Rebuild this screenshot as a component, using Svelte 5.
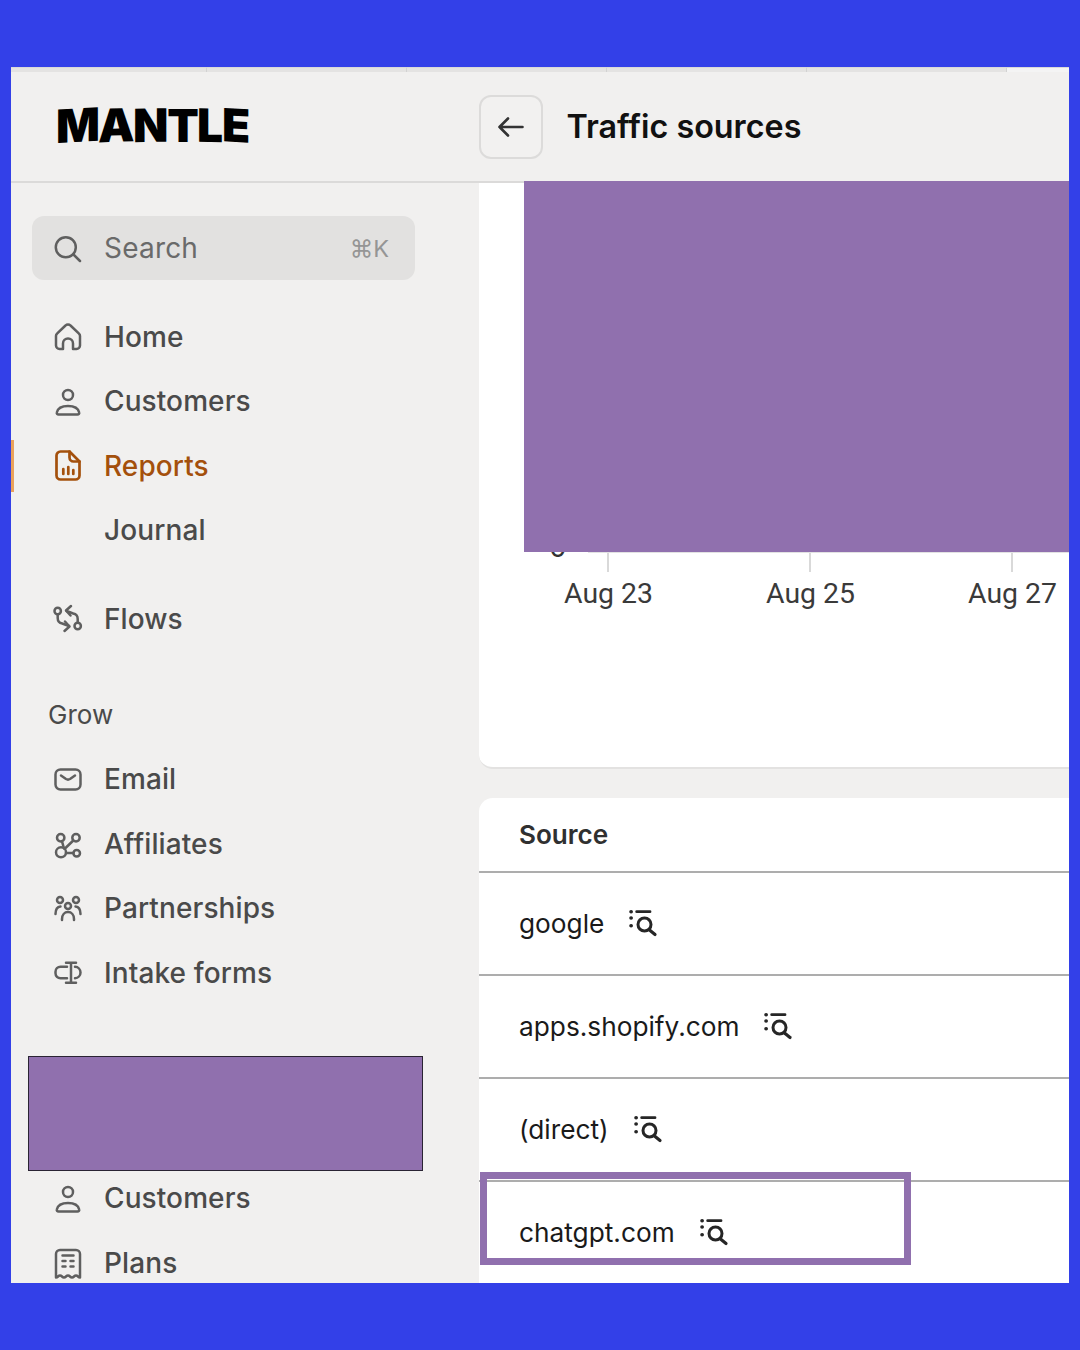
<script>
	const mainNav = [
		{ label: 'Home', icon: 'home' },
		{ label: 'Customers', icon: 'user' },
		{ label: 'Reports', icon: 'report', active: true },
		{ label: 'Journal', icon: null }
	];
	const growNav = [
		{ label: 'Email', icon: 'mail' },
		{ label: 'Affiliates', icon: 'nodes' },
		{ label: 'Partnerships', icon: 'people' },
		{ label: 'Intake forms', icon: 'cursor' }
	];
	const lowerNav = [
		{ label: 'Customers', icon: 'user' },
		{ label: 'Plans', icon: 'receipt' }
	];
	const sources = ['google', 'apps.shopify.com', '(direct)', 'chatgpt.com'];
	const ticks = ['Aug 23', 'Aug 25', 'Aug 27'];
	const logo = [
		{ ch: 'M', t: 'skewY(-3deg)' },
		{ ch: 'A', t: 'skewY(-2deg)' },
		{ ch: 'N', t: 'skewY(-1deg)' },
		{ ch: 'T', t: 'none' },
		{ ch: 'L', t: 'skewY(1deg)' },
		{ ch: 'E', t: 'skewY(3deg)' }
	];
</script>

{#snippet icon(name)}
	<svg class="icon" viewBox="0 0 28 28" fill="none" stroke="currentColor" stroke-width="2.5" stroke-linecap="round" stroke-linejoin="round">
		{#if name === 'home'}
			<path d="M2 13a3 3 0 0 1 1-2.3L11.500 2.500a3.500 3.500 0 0 1 5 0L25 10.700a3 3 0 0 1 1 2.300V22.500a3.500 3.500 0 0 1-3.500 3.500H19V20.500a5 5 0 0 0-10 0V26H5.500A3.500 3.500 0 0 1 2 22.500Z" />
		{:else if name === 'user'}
			<circle cx="14" cy="8" r="5" />
			<path d="M4.500 27.500h19c1.200 0 2-.9 1.700-2-.9-3.900-5-6.500-11.200-6.500S3.700 21.600 2.800 25.500c-.3 1.100.5 2 1.700 2Z" />
		{:else if name === 'report'}
			<g stroke-width="2.700">
				<path d="M6.500-.5h9L25.500 9.500V23.500a4 4 0 0 1-4 4H6.500a4 4 0 0 1-4-4V3.500a4 4 0 0 1 4-4Z" />
				<path d="M15.500-.5V5.500a4 4 0 0 0 4 4h6" />
				<path d="M9.300 17v5M14.300 15v7M19.300 18v4" />
			</g>
		{:else if name === 'flows'}
			<circle cx="3.700" cy="6" r="3.200" />
			<circle cx="23.700" cy="21" r="3.200" />
			<path d="M3.700 9.500v3.500c0 3 1.500 5 4.500 5.500L15 21" />
			<path d="M10.500 26 15.500 21.500 11 16.500" />
			<path d="M23.700 17.500V14c0-3-1.500-5-4.500-5.500L12.500 6" />
			<path d="M17 1 12 5.500 16.500 10.500" />
		{:else if name === 'mail'}
			<rect x="1.500" y="4.500" width="25" height="20" rx="5" />
			<path d="M7 10.500l5 3.500c1.300.8 2.700.8 4 0l5-3.500" />
		{:else if name === 'nodes'}
			<circle cx="6.700" cy="7.700" r="3.700" />
			<circle cx="22" cy="7.700" r="3.700" />
			<circle cx="7" cy="22.300" r="5" />
			<circle cx="22.700" cy="23.300" r="3.300" />
			<path d="M8 11.300 10 18.500M19.300 10.500 11 18.500M12 23h7.400" />
		{:else if name === 'people'}
			<circle cx="6" cy="6" r="3" />
			<circle cx="22" cy="6" r="3" />
			<circle cx="14" cy="12" r="3" />
			<path d="M1.500 20c0-4 1.500-7 5-7.500M26.500 20c0-4-1.500-7-5-7.500M8 26v-1c0-4 2.500-7 6-7s6 3 6 7v1" />
		{:else if name === 'cursor'}
			<path d="M13 7.700H6.500a5 5 0 0 0-5 5v1.600a5 5 0 0 0 5 5H13" />
			<path d="M21 7.700a5.800 5.800 0 0 1 5.500 5.800 5.800 5.800 0 0 1-5.500 5.800" />
			<path d="M12 3.700h10M17 3.700v20M12 23.700h10" />
		{:else if name === 'receipt'}
			<path d="M6 1h16a4 4 0 0 1 4 4v23.500c-2 0-2-2-4-2s-2 2-4 2-2-2-4-2-2 2-4 2-2-2-4-2-2 2-4 2V5a4 4 0 0 1 4-4Z" />
			<path d="M8.500 6.500h11M8.500 12h3M16.500 12h3M8.500 17.500h3M16.500 17.500h3" />
		{/if}
	</svg>
{/snippet}

{#snippet navItem(item)}
	<a class="nav-item" class:active={item.active} href="#top">
		<span class="icon-slot">
			{#if item.icon}{@render icon(item.icon)}{/if}
		</span>
		{item.label}
	</a>
{/snippet}

<div class="frame">
	<div class="strip">
		<span></span><span></span><span></span><span></span><span></span><span class="last"></span>
	</div>

	<header class="topbar">
		<div class="brand">
			<div class="logo">
				{#each logo as l}
					<span style="transform: {l.t}">{l.ch}</span>
				{/each}
			</div>
		</div>
		<div class="page-title">
			<button class="back" aria-label="Back">
				<svg viewBox="0 0 28 28" width="28" height="28" fill="none" stroke="currentColor" stroke-width="2.6" stroke-linecap="round" stroke-linejoin="round">
					<path d="M25.500 14H2.500M11 5.500 2.500 14l8.500 8.500" />
				</svg>
			</button>
			<h1>Traffic sources</h1>
		</div>
	</header>

	<div class="body">
		<aside class="sidebar">
			<div class="search">
				<svg class="icon" viewBox="0 0 28 28" fill="none" stroke="currentColor" stroke-width="2.5" stroke-linecap="round">
					<circle cx="11.800" cy="13.200" r="10" />
					<path d="m19.500 20.500 6.500 6.500" />
				</svg>
				<span class="search-label">Search</span>
				<span class="kbd">⌘K</span>
			</div>

			<nav class="nav main-nav">
				{#each mainNav as item}
					{@render navItem(item)}
				{/each}
			</nav>

			<nav class="nav flows">
				{@render navItem({ label: 'Flows', icon: 'flows' })}
			</nav>

			<div class="section-label">Grow</div>
			<nav class="nav">
				{#each growNav as item}
					{@render navItem(item)}
				{/each}
			</nav>

			<div class="covered"></div>

			<nav class="nav">
				{#each lowerNav as item}
					{@render navItem(item)}
				{/each}
			</nav>
		</aside>

		<main class="content">
			<section class="card chart">
				<div class="plot">
					<span class="zero">0</span>
				</div>
				<div class="axis">
					{#each ticks as tick}
						<div class="tick">
							<i></i>
							<span>{tick}</span>
						</div>
					{/each}
				</div>
			</section>

			<section class="card table">
				<div class="table-head">Source</div>
				{#each sources as source}
					<div class="row">
						<span>{source}</span>
						<svg class="drill" viewBox="0 0 28 28" fill="none" stroke="currentColor" stroke-linecap="round">
							<path d="M8.700 1.700H22" stroke-width="2.800" />
							<path d="M3 1.700h.2M3 8h.2M3 15.700h.2" stroke-width="3.600" />
							<circle cx="16.500" cy="14.500" r="6.500" stroke-width="3" />
							<path d="M21.500 20 27 24.500" stroke-width="3.200" />
						</svg>
					</div>
				{/each}
			</section>
		</main>
	</div>

	<!-- redactions and callout on top of the screenshot -->
	<div class="redact redact-chart"></div>
	<div class="redact redact-nav"></div>
	<div class="callout"></div>
</div>

<style>
	:global(body) {
		margin: 0;
		background: #3340e8;
	}

	.frame {
		position: relative;
		box-sizing: border-box;
		width: 1058px;
		height: 1216px;
		margin: 67px 0 0 11px;
		display: flex;
		flex-direction: column;
		overflow: hidden;
		background: #f1f0ef;
		font-family: Inter, 'Liberation Sans', sans-serif;
		color: #4a4a4a;
	}

	.strip {
		flex: none;
		display: flex;
		height: 5px;
		background: #e4e3e2;
	}

	.strip span {
		box-sizing: border-box;
		flex: none;
		width: 200px;
		border-right: 1px solid #d2d2d2;
		border-top: 1px solid #d9d9d9;
	}

	.strip span:first-child {
		width: 196px;
	}

	.strip .last {
		flex: 1;
		background: #f4f4f4;
		border-right: 0;
	}

	.topbar {
		flex: none;
		box-sizing: border-box;
		height: 111px;
		display: flex;
		align-items: center;
		border-bottom: 2px solid #dbdad9;
	}

	.brand {
		box-sizing: border-box;
		width: 468px;
		padding-left: 45px;
	}

	.logo {
		display: flex;
		margin-bottom: 3px;
		font-size: 46px;
		font-weight: 900;
		line-height: 1;
		letter-spacing: -1.6px;
		color: #000;
	}

	.logo span {
		display: block;
	}

	.page-title {
		display: flex;
		align-items: center;
		gap: 23.500px;
	}

	.back {
		box-sizing: border-box;
		width: 64px;
		height: 64px;
		padding: 0;
		display: flex;
		align-items: center;
		justify-content: center;
		background: #f2f1f0;
		border: 2px solid #dcdbda;
		border-radius: 12px;
		color: #333;
	}

	h1 {
		margin: 0;
		font-size: 32.300px;
		font-weight: 600;
		color: #111;
	}

	.body {
		flex: 1;
		min-height: 0;
		display: flex;
	}

	.sidebar {
		flex: none;
		box-sizing: border-box;
		width: 468px;
		padding-top: 33px;
	}

	.search {
		box-sizing: border-box;
		width: 383px;
		height: 64px;
		margin-left: 21px;
		padding: 0 26px 0 22px;
		display: flex;
		align-items: center;
		gap: 22px;
		background: #e2e1e0;
		border-radius: 12px;
		color: #5f5f5f;
		font-size: 28px;
		letter-spacing: 0.2px;
	}

	.search-label {
		flex: 1;
		color: #6a6a6a;
	}

	.kbd {
		font-size: 23.500px;
		letter-spacing: 0;
		color: #959595;
	}

	.nav {
		display: flex;
		flex-direction: column;
	}

	.main-nav {
		margin-top: 24.600px;
	}

	.flows {
		margin-top: 24px;
	}

	.nav-item {
		position: relative;
		box-sizing: border-box;
		height: 64.500px;
		padding-left: 43px;
		display: flex;
		align-items: center;
		gap: 22px;
		font-size: 28px;
		font-weight: 450;
		letter-spacing: 0.1px;
		color: #4a4a4a;
		text-decoration: none;
	}

	.nav-item.active {
		color: #a4500c;
	}

	.nav-item.active::before {
		content: '';
		position: absolute;
		left: 0;
		top: 6px;
		bottom: 6px;
		width: 3px;
		background: #eaa25c;
	}

	.icon-slot {
		flex: none;
		width: 28px;
		height: 28px;
		color: #5f5f5f;
	}

	.active .icon-slot {
		color: #a4500c;
	}

	.icon {
		display: block;
		flex: none;
		width: 28px;
		height: 28px;
		overflow: visible;
	}

	.section-label {
		height: 64.500px;
		margin-top: 31.500px;
		padding-left: 37px;
		display: flex;
		align-items: center;
		font-size: 26px;
		color: #4a4a4a;
	}

	.covered {
		height: 129px;
		margin-top: 32px;
	}

	.content {
		flex: 1;
		min-width: 0;
		display: flex;
		flex-direction: column;
		gap: 29px;
	}

	.card {
		background: #fff;
		overflow: hidden;
	}

	.chart {
		flex: none;
		height: 586px;
		border-bottom: 2px solid #e3e2e1;
		box-sizing: border-box;
		border-radius: 0 0 0 14px;
	}

	.plot {
		height: 369px;
		border-bottom: 1px solid #e2e2e2;
		margin-left: 109px;
		position: relative;
	}

	.zero {
		position: absolute;
		left: -39px;
		bottom: -9px;
		font-size: 28px;
		line-height: 1;
		color: #333;
	}

	.axis {
		display: flex;
		padding-left: 28px;
	}

	.tick {
		flex: none;
		width: 202px;
		display: flex;
		flex-direction: column;
		align-items: center;
	}

	.tick i {
		display: block;
		width: 2px;
		height: 19px;
		background: #d9d9d9;
	}

	.tick span {
		margin-top: 6px;
		margin-left: 1px;
		font-family: Roboto, Inter, sans-serif;
		font-size: 28.400px;
		line-height: 32px;
		color: #3a3a3a;
		white-space: nowrap;
	}

	.table {
		flex: 1;
		border-radius: 14px 0 0 0;
	}

	.table-head {
		box-sizing: border-box;
		height: 75px;
		padding: 0 40px;
		display: flex;
		align-items: center;
		font-size: 26.100px;
		font-weight: 600;
		color: #303030;
		border-bottom: 2px solid #adadad;
	}

	.row {
		box-sizing: border-box;
		height: 103px;
		padding: 0 40px;
		display: flex;
		align-items: center;
		gap: 24px;
		font-size: 26.250px;
		color: #1a1a1a;
		border-bottom: 2px solid #adadad;
	}

	.drill {
		flex: none;
		width: 28px;
		height: 28px;
		overflow: visible;
		color: #262626;
	}

	.redact {
		position: absolute;
		background: #9070ae;
	}

	.redact-chart {
		left: 513px;
		top: 114px;
		right: 0;
		height: 371px;
	}

	.redact-nav {
		box-sizing: border-box;
		left: 17px;
		top: 989px;
		width: 395px;
		height: 115px;
		border: 1px solid #2a2433;
	}

	.callout {
		position: absolute;
		box-sizing: border-box;
		left: 469px;
		top: 1105px;
		width: 431px;
		height: 93px;
		border: 7px solid #9070ae;
	}
</style>
